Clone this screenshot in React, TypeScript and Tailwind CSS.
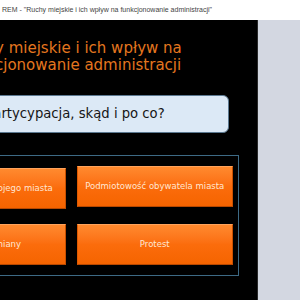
const btn =
  "flex items-center justify-center h-[41px] bg-gradient-to-b from-[#ff8a2e] via-[#fb6c0c] to-[#f56400] border border-[#e05a00] border-t-[#ffa35c] border-b-[#b84800] border-r-[#c85000] text-[#ffe7d4] text-[8.5px] font-['DejaVu_Sans',sans-serif] whitespace-nowrap";

export default function App() {
  return (
    <div className="w-[300px] h-[300px] flex flex-col overflow-hidden bg-white">
      <div className="h-5 flex items-center pl-[2px] text-[7px] text-[#444] font-medium font-['Liberation_Sans',Arial,sans-serif] whitespace-nowrap">
        REM - "Ruchy miejskie i ich wpływ na funkcjonowanie administracji"
      </div>
      <div className="flex flex-1 min-h-0">
        <div className="w-[258px] bg-black border-r border-[#2a2a2a] overflow-hidden">
          <div className="ml-[-97px] w-[336px] font-['DejaVu_Sans',sans-serif]">
            <div className="pt-[20px] pl-[55px] text-[15px] leading-[16.5px] text-[#e4761f] whitespace-nowrap">
              <div>Ruchy miejskie i ich wpływ na</div>
              <div className="pl-[4px]">funkcjonowanie administracji</div>
            </div>
            <div className="mt-[22px] ml-[67px] w-[259px] h-[38px] flex items-center pl-[15px] rounded-[6px] border border-[#5b7890] bg-[#dce9f6] text-[13.2px] text-[#151515] whitespace-nowrap">
              Partycypacja, skąd i po co?
            </div>
            <div className="mt-[22px] h-[121px] border border-[#3d6a85] px-[5px] pt-[10px] grid grid-cols-2 gap-x-[11px] gap-y-[15px] content-start">
              <div className={btn + " mt-[2px]"}>Poznaj historię swojego miasta</div>
              <div className={btn}>Podmiotowość obywatela miasta</div>
              <div className={btn}>Czas przemiany</div>
              <div className={btn}>Protest</div>
            </div>
          </div>
        </div>
        <div className="flex-1 bg-[#d3d7e1]" />
      </div>
    </div>
  );
}
